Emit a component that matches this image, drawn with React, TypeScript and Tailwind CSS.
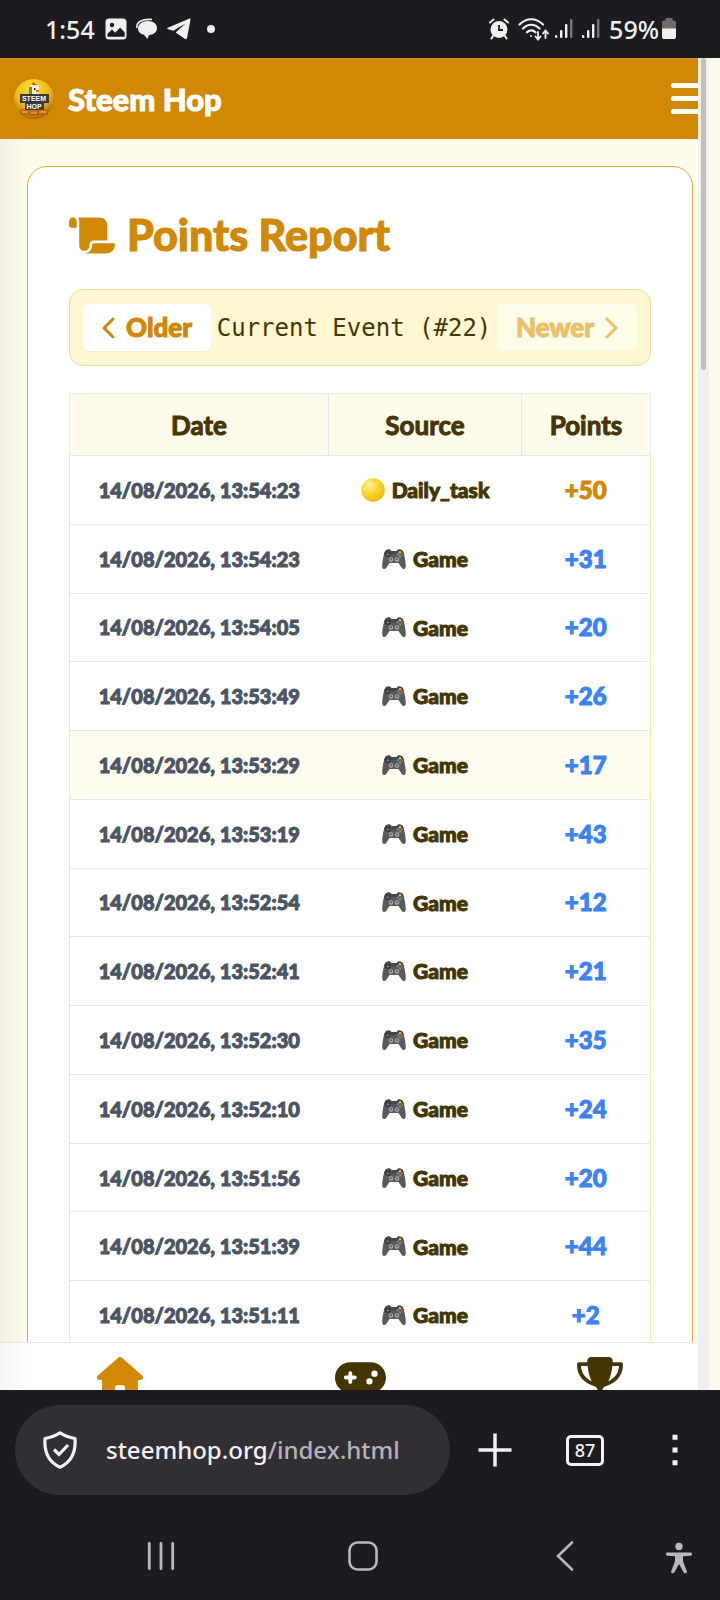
import { FaChevronLeft, FaChevronRight, FaGamepad, FaHouse, FaScroll, FaTrophy } from "react-icons/fa6";

interface Entry {
  date: string;
  source: "Daily_task" | "Game";
  points: number;
  active?: boolean;
}

const entries: Entry[] = [
  { date: "14/08/2026, 13:54:23", source: "Daily_task", points: 50 },
  { date: "14/08/2026, 13:54:23", source: "Game", points: 31 },
  { date: "14/08/2026, 13:54:05", source: "Game", points: 20 },
  { date: "14/08/2026, 13:53:49", source: "Game", points: 26 },
  { date: "14/08/2026, 13:53:29", source: "Game", points: 17, active: true },
  { date: "14/08/2026, 13:53:19", source: "Game", points: 43 },
  { date: "14/08/2026, 13:52:54", source: "Game", points: 12 },
  { date: "14/08/2026, 13:52:41", source: "Game", points: 21 },
  { date: "14/08/2026, 13:52:30", source: "Game", points: 35 },
  { date: "14/08/2026, 13:52:10", source: "Game", points: 24 },
  { date: "14/08/2026, 13:51:56", source: "Game", points: 20 },
  { date: "14/08/2026, 13:51:39", source: "Game", points: 44 },
  { date: "14/08/2026, 13:51:11", source: "Game", points: 2 },
];

// heavy rounded look shared by all of the site's own text
const display = "font-[Lato] font-black [-webkit-text-stroke:1px_currentColor]";

const SignalIcon = () => (
  <svg width="20" height="22" viewBox="0 0 20 22" fill="#f0f0f0">
    <rect x="1" y="17" width="2.4" height="3" rx="1" />
    <rect x="6" y="12" width="2.4" height="8" rx="1" />
    <rect x="11" y="6" width="2.4" height="14" rx="1" />
    <rect x="16" y="1" width="2.4" height="19" rx="1" fill="#77757a" />
  </svg>
);

const StatusBar = () => (
  <div className="flex h-[58px] shrink-0 items-center justify-between bg-[#1e1b20] pr-11 pl-[45px] text-[25px] leading-[58px] font-medium text-[#f0f0f0]">
    <div className="flex items-center">
      <span>1:54</span>
      <svg className="ml-[10px]" width="22" height="22" viewBox="0 0 22 22">
        <rect x="0.5" y="0.5" width="21" height="21" rx="3.5" fill="#f0f0f0" />
        <circle cx="7" cy="7" r="2.2" fill="#1e1b20" />
        <path d="M2.500 18.800v-3l4.500-4.300 3.300 3.200 4.800-5.200 4.600 5v4.300z" fill="#1e1b20" />
      </svg>
      <svg className="ml-[9px]" width="22" height="22" viewBox="0 0 22 22">
        <path d="M1 10C0 4 6 .8 16 1.500" fill="none" stroke="#f0f0f0" strokeWidth="1.6" />
        <path d="M12 3c5.500 0 9 3 9 7.200 0 4-3.500 6.600-8 6.800l-1.600 4L8 16.800C4 16 2 13.500 2 10.500 2 6 6.500 3 12 3z" fill="#f0f0f0" />
      </svg>
      <svg className="ml-[9px]" width="24" height="22" viewBox="0 0 24 22" fill="#f0f0f0">
        <path d="M.8 9.800 22 .7c1.200-.4 1.700.3 1.400 1.500l-3.300 17.600c-.3 1.400-1.200 1.700-2.300 1L8.700 14.500 18.500 5.400 6.300 12.800 1.200 11.300c-1.200-.4-1.200-1-.4-1.500z" />
      </svg>
      <span className="ml-[16px] size-2 rounded-full bg-[#f0f0f0]" />
    </div>
    <div className="flex items-center">
      <svg width="20" height="22" viewBox="0 0 20 22">
        <circle cx="10" cy="11.500" r="8.500" fill="#f0f0f0" />
        <path d="M1 4.500 4.500 1.500M19 4.500 15.500 1.500M4 18l-1.500 2.500M16 18l1.500 2.500" stroke="#f0f0f0" strokeWidth="2" strokeLinecap="round" />
        <path d="M10 7v5h4" fill="none" stroke="#1e1b20" strokeWidth="1.800" />
      </svg>
      <svg className="ml-[9px]" width="31" height="24" viewBox="0 0 31 24" fill="none" stroke="#f0f0f0" strokeWidth="2.200" strokeLinecap="round">
        <path d="M1.500 7.500C8.500.5 18 .5 25 7.500M5 11.500c5-5 11.500-5 16.500 0M9 15.300c2.500-2.500 6-2.500 8.500 0" />
        <circle cx="13" cy="19" r="1" fill="#f0f0f0" stroke="none" />
        <path strokeWidth="1.800" d="M20 15v7m-2.500-2.500L20 22.500l2.500-3M27.500 21v-7M25 16.500l2.500-3 2.500 3" />
      </svg>
      <span className="ml-[5px]">
        <SignalIcon />
      </span>
      <span className="ml-[7px]">
        <SignalIcon />
      </span>
      <span className="ml-[8px]">59%</span>
      <svg className="ml-[3px]" width="14" height="22" viewBox="0 0 14 22">
        <path d="M3.500 0h7v2.500h1.500a2 2 0 0 1 2 2V11H0V4.500a2 2 0 0 1 2-2h1.500z" fill="#6e6c70" />
        <path d="M0 10.500h14V19a2 2 0 0 1-2 2H2a2 2 0 0 1-2-2z" fill="#f0f0f0" />
      </svg>
    </div>
  </div>
);

const Logo = () => (
  <svg width="40" height="42" viewBox="0 0 40 42" className="font-['Liberation_Sans']">
    <defs>
      <radialGradient id="coin" cx="45%" cy="25%" r="75%">
        <stop offset="0%" stopColor="#ffe23c" />
        <stop offset="60%" stopColor="#f0b418" />
        <stop offset="100%" stopColor="#a8680c" />
      </radialGradient>
    </defs>
    <circle cx="20" cy="21" r="20" fill="url(#coin)" />
    <rect x="16" y="7" width="9" height="10" rx="1" fill="#f7edcf" />
    <rect x="15" y="9" width="3" height="7" fill="#6f8c3a" />
    <path d="M18.500 7V4.500h2V6h2v1z" fill="#d4281c" />
    <rect x="20" y="10" width="1.500" height="2" fill="#33260f" />
    <rect x="22" y="12" width="3" height="2" fill="#e87c12" />
    <path d="M6 16h29v9h-5v7H11v-7H6z" fill="#3b3a33" />
    <text x="20" y="23" textAnchor="middle" fontSize="7" fontWeight="700" fill="#fff">STEEM</text>
    <text x="20" y="31" textAnchor="middle" fontSize="7" fontWeight="700" fill="#fff">HOP</text>
    <path d="M7 32h8v4H7zM15.800 33h8v3.500h-8zM24.600 32h9v4h-9z" fill="#e88b20" stroke="#8c430b" strokeWidth=".7" />
  </svg>
);

const Header = () => (
  <header className="flex h-[81px] shrink-0 items-center overflow-hidden bg-[#d18805] pl-[14px]">
    <Logo />
    <h1 className={`${display} ml-[14px] flex-1 text-[31px] leading-10 text-white`}>Steem Hop</h1>
    <button type="button" aria-label="Menu" className="-mr-2 flex w-[35px] shrink-0 flex-col gap-2">
      <span className="h-[5px] rounded-full bg-white" />
      <span className="h-[5px] rounded-full bg-white" />
      <span className="h-[5px] rounded-full bg-white" />
    </button>
  </header>
);

const CoinEmoji = () => (
  <svg width="24" height="24" viewBox="0 0 24 24" className="shrink-0">
    <defs>
      <radialGradient id="ball" cx="35%" cy="30%" r="72%">
        <stop offset="0%" stopColor="#fff3a0" />
        <stop offset="45%" stopColor="#fbd93a" />
        <stop offset="100%" stopColor="#eeb90c" />
      </radialGradient>
    </defs>
    <circle cx="12" cy="12" r="11.800" fill="url(#ball)" />
  </svg>
);

const PadEmoji = () => (
  <svg width="24" height="24" viewBox="0 0 24 24" className="shrink-0">
    <path d="M4 3.200c1-.7 3.500-.8 4.500-.1l.8.900h5.400l.8-.9c1-.7 3.500-.6 4.500.1 2 1 3.600 10.500 3.800 15.500.1 3.500-2.400 4.300-4 2.200L16.500 16h-9l-3.300 4.900c-1.600 2.100-4.100 1.300-4-2.200C.4 13.700 2 4.200 4 3.200z" fill="#5a5a5c" />
    <path d="M4 3.200c1-.7 3.500-.8 4.500-.1l.8.900h5.400l.8-.9c1-.7 3.500-.6 4.500.1.800.500 1.400 2 2 4H2c.600-2 1.200-3.500 2-4z" fill="#48484b" />
    <circle cx="5.800" cy="7.300" r="2.800" fill="#303033" />
    <path d="M5.800 5.300v4M3.800 7.300h4" stroke="#77777a" strokeWidth="1" />
    <circle cx="9" cy="12.500" r="2.200" fill="#b5b5b8" />
    <circle cx="15" cy="12.500" r="2.200" fill="#b5b5b8" />
    <circle cx="9" cy="12.300" r="1.300" fill="#6c6c70" />
    <circle cx="15" cy="12.300" r="1.300" fill="#6c6c70" />
    <circle cx="18" cy="5.200" r="1.200" fill="#f0b92c" />
    <circle cx="16" cy="7.300" r="1.200" fill="#3f8fe0" />
    <circle cx="20" cy="7.300" r="1.200" fill="#e0442f" />
    <circle cx="18" cy="9.400" r="1.200" fill="#58b04a" />
  </svg>
);

const EventPicker = () => (
  <div className="mt-[26px] flex h-[77px] items-center justify-between rounded-[14px] border border-[#f0df99] bg-[#fef7d1] px-[13px] text-[#453601]">
    <button type="button" className={`${display} flex h-[47px] items-center gap-2 rounded-md bg-white px-[19px] text-[26px] text-[#d18805] shadow-xs`}>
      <FaChevronLeft size={24} className="-mx-1" />
      Older
    </button>
    <span className="font-['DejaVu_Sans_Mono'] text-2xl whitespace-nowrap">Current Event (#22)</span>
    <button type="button" disabled className={`${display} flex h-[47px] items-center gap-2 rounded-md bg-[#fffce9] px-[19px] text-[26px] text-[#ebc06a]`}>
      Newer
      <FaChevronRight size={24} className="-mx-1" />
    </button>
  </div>
);

const PointsTable = () => (
  <table className={`${display} mt-[27px] h-[957px] w-full table-fixed border-collapse text-center`}>
    <thead>
      <tr className="h-[62px] bg-[#fffbeb] text-[26px] leading-8 text-[#453601]">
        <th className="w-[259px] border border-[#e5e7eb]">Date</th>
        <th className="w-[193px] border border-[#e5e7eb]">Source</th>
        <th className="border border-[#e5e7eb]">Points</th>
      </tr>
    </thead>
    <tbody className="border-x border-[#fbeb9e]">
      {entries.map((entry, i) => (
        <tr key={i} className={entry.active ? "border-b border-[#e5e7eb] bg-[#fffcf0]" : "border-b border-[#e5e7eb]"}>
          <td className="text-xl text-[#4b5563]">{entry.date}</td>
          <td className="text-[21px] text-[#453601]">
            <span className="flex items-center justify-center gap-[7px]">
              {entry.source === "Game" ? <PadEmoji /> : <CoinEmoji />}
              {entry.source}
            </span>
          </td>
          <td className={entry.source === "Game" ? "text-2xl text-[#3b82f6]" : "text-2xl text-[#d18805]"}>+{entry.points}</td>
        </tr>
      ))}
    </tbody>
  </table>
);

const BottomNav = () => (
  <nav className="-mr-[22px] grid h-12 shrink-0 grid-cols-3 justify-items-center border-t border-[#e5e7eb] bg-white pt-[14px] text-[#453601]">
    <a href="#home" aria-label="Home" className="text-[#d18805]">
      <FaHouse className="h-[41px] w-[46px]" />
    </a>
    <a href="#game" aria-label="Game">
      <FaGamepad className="h-[41px] w-[51px]" />
    </a>
    <a href="#ranking" aria-label="Ranking">
      <FaTrophy className="h-[41px] w-[46px]" />
    </a>
  </nav>
);

const BrowserBar = () => (
  <div className="flex shrink-0 items-center pt-[15px] pl-[15px]">
    <button type="button" className="flex h-[90px] flex-1 items-center rounded-full bg-[#322f34] pl-[28px] text-2xl font-medium text-[#f3eff7]">
      <svg width="34" height="38" viewBox="0 0 34 38" fill="none" stroke="#f3eff7" strokeWidth="3.200" strokeLinejoin="round">
        <path d="M17 1.800c4.500 3.200 9.500 4.800 15 5.700 1 14-3.500 23.500-15 28.700C5.500 31 1 21.500 2 7.500 7.500 6.600 12.500 5 17 1.800z" />
        <path d="m11 18.500 5 5 9-9.500" strokeLinejoin="miter" />
      </svg>
      <span className="ml-[29px]">
        steemhop.org<span className="text-[#b5b2b8]">/index.html</span>
      </span>
    </button>
    <button type="button" aria-label="New tab" className="flex w-[90px] justify-center">
      <svg width="34" height="34" viewBox="0 0 34 34" stroke="#f3eff7" strokeWidth="3.500">
        <path d="M17 .5v33M.5 17h33" />
      </svg>
    </button>
    <button type="button" className="mx-[26px] flex h-[31px] w-[38px] items-center justify-center rounded-[5px] border-[3px] border-[#f3eff7] text-lg font-medium text-[#f3eff7]">
      87
    </button>
    <button type="button" aria-label="More" className="flex w-[90px] justify-center">
      <svg width="6" height="32" viewBox="0 0 6 32" fill="#f3eff7">
        <path d="M.5.800h5v5h-5zM.5 13.500h5v5h-5zM.5 26.200h5v5h-5z" />
      </svg>
    </button>
  </div>
);

const SystemNav = () => (
  <div className="grid h-[105px] shrink-0 grid-cols-[1fr_1fr_1fr_54px] items-center justify-items-center pt-4 pl-[60px]">
    <button type="button" aria-label="Recents">
      <svg width="28" height="30" viewBox="0 0 28 30" stroke="#b9b8ba" strokeWidth="2.800" strokeLinecap="round">
        <path d="M2.300 2.300v25.400M14 2.300v25.400M25.700 2.300v25.400" />
      </svg>
    </button>
    <button type="button" aria-label="Home screen">
      <svg width="30" height="30" viewBox="0 0 30 30" fill="none" stroke="#b9b8ba" strokeWidth="2.600">
        <rect x="1.500" y="1.500" width="27" height="27" rx="8" />
      </svg>
    </button>
    <button type="button" aria-label="Back">
      <svg width="18" height="30" viewBox="0 0 18 30" fill="none" stroke="#b9b8ba" strokeWidth="2.600" strokeLinecap="round">
        <path d="M16 1.500 2 15l14 13.500" />
      </svg>
    </button>
    <button type="button" aria-label="Accessibility" className="justify-self-start pt-1">
      <svg width="26" height="32" viewBox="0 0 26 32" fill="#b9b8ba">
        <circle cx="13" cy="4.500" r="3.700" />
        <path d="M1.500 10.500h23a1.500 1.500 0 0 1 0 3.200l-7.500.6v5l3.800 10c.5 2-2.500 2.800-3.300 1L13 22l-4.500 8.300c-.8 1.800-3.800 1-3.300-1l3.800-10v-5l-7.500-.6a1.500 1.500 0 0 1 0-3.200z" />
      </svg>
    </button>
  </div>
);

const App = () => {
  return (
    <div className="flex h-screen flex-col overflow-hidden bg-[#1e1b20] font-['Noto_Sans',sans-serif]">
      <StatusBar />
      <div className="flex min-h-0 flex-1 bg-[#fffbeb]">
        <div className="flex min-w-0 flex-1 flex-col overflow-hidden">
          <Header />
          <div className="relative flex min-h-0 flex-1 flex-col">
            <main className="min-h-0 flex-1 overflow-hidden bg-[#fffbeb] pt-[27px] pr-[5px] pl-[27px]">
              <section className="rounded-[20px] border border-[#d9ae3a] bg-white px-[41px] pt-10 pb-10">
                <h2 className={`${display} flex h-14 items-center gap-3 text-[43px] leading-[56px] text-[#d18805]`}>
                  <FaScroll className="h-[41px] w-[46px]" />
                  Points Report
                </h2>
                <EventPicker />
                <PointsTable />
              </section>
            </main>
            <BottomNav />
            <div className="pointer-events-none absolute inset-y-0 left-0 w-7 bg-gradient-to-r from-black/4 to-transparent" />
          </div>
        </div>
        <div className="flex w-[11px] shrink-0 justify-center bg-[#efefef]">
          <div className="h-[312px] w-[5px] rounded-full bg-[#bfbfbf]" />
        </div>
        <div className="w-[11px] shrink-0" />
      </div>
      <BrowserBar />
      <SystemNav />
    </div>
  );
};

export default App;
